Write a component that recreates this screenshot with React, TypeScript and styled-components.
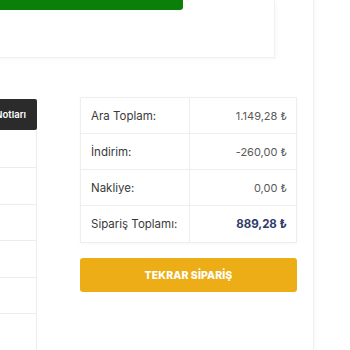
import React from "react";
import styled, { createGlobalStyle } from "styled-components";

const Global = createGlobalStyle`
  html, body { margin: 0; padding: 0; background: #fff; }
  body { font-family: "Inter", "Noto Sans", sans-serif; overflow: hidden; }
`;

const Viewport = styled.div`
  width: 350px;
  height: 350px;
  overflow: hidden;
  display: flex;
  background: #fff;
`;

const Panel = styled.div`
  width: 313px;
  flex: none;
  height: 350px;
  background: #fff;
  border-right: 1px solid #f0f0f0;
  box-shadow: 2px 0 3px rgba(0, 0, 0, 0.025);
  display: flex;
  flex-direction: column;
`;

const TopCard = styled.div`
  margin-left: -60px;
  width: 335px;
  height: 58px;
  box-sizing: border-box;
  border-right: 1px solid #f1f1f1;
  border-bottom: 1px solid #f1f1f1;
  box-shadow: 1px 1px 3px rgba(0, 0, 0, 0.04);
  display: flex;
  align-items: flex-start;
`;

const GreenButton = styled.div`
  width: 243px;
  height: 10px;
  background: #0a7f0a;
  border-radius: 0 0 3px 3px;
`;

const Lower = styled.div`
  margin-top: 39px;
  display: flex;
  align-items: flex-start;
  flex: 1;
`;

const Sidebar = styled.div`
  margin-left: -80px;
  width: 118px;
  flex: none;
  display: flex;
  flex-direction: column;
  align-self: stretch;
`;

const DarkTab = styled.div`
  margin-top: 2px;
  height: 31px;
  width: 117px;
  background: #2b2b2b;
  border-radius: 2px;
  color: #fff;
  font-size: 9.5px;
  font-weight: 600;
  display: flex;
  align-items: center;
  justify-content: flex-end;
  padding-right: 11px;
  box-sizing: border-box;
  white-space: nowrap;
`;

const SideList = styled.div`
  flex: 1;
  border-right: 1px solid #ececec;
  margin-right: 1px;
  display: flex;
  flex-direction: column;
`;

const SideRow = styled.div`
  height: 36.5px;
  flex: none;
  border-bottom: 1px solid #ececec;
  box-sizing: border-box;
  &:first-child { height: 38px; }
`;

const Summary = styled.div`
  margin-left: 42px;
  width: 217px;
  display: flex;
  flex-direction: column;
`;

const Table = styled.div`
  border: 1px solid #eeeeee;
  display: grid;
  grid-template-columns: 108px 108px;
  box-shadow: 0 1px 3px rgba(0, 0, 0, 0.03);
`;

const Cell = styled.div<{ $right?: boolean; $last?: boolean }>`
  height: 36px;
  box-sizing: border-box;
  display: flex;
  align-items: center;
  justify-content: ${(p) => (p.$right ? "flex-end" : "flex-start")};
  padding: ${(p) => (p.$right ? "0 10px 0 0" : "0 0 0 10px")};
  border-left: ${(p) => (p.$right ? "1px solid #eeeeee" : "none")};
  border-bottom: ${(p) => (p.$last ? "none" : "1px solid #eeeeee")};
  font-size: ${(p) => (p.$right ? "11px" : "11.5px")};
  color: ${(p) => (p.$right ? "#5a5a5a" : "#3a3a3a")};
  white-space: nowrap;
`;

const Total = styled.span`
  color: #2d3b6b;
  font-weight: 700;
  font-size: 11.5px;
`;

const ReorderButton = styled.div`
  margin-top: 15px;
  height: 34px;
  background: #ecad16;
  border-radius: 3px;
  color: #fff;
  font-weight: 800;
  font-size: 10.5px;
  display: flex;
  align-items: center;
  justify-content: center;
  letter-spacing: 0.1px;
`;

const rows = [
  { label: "Ara Toplam:", value: "1.149,28 ₺" },
  { label: "İndirim:", value: "-260,00 ₺" },
  { label: "Nakliye:", value: "0,00 ₺" },
];

export default function App() {
  return (
    <>
      <Global />
      <Viewport>
        <Panel>
          <TopCard>
            <GreenButton />
          </TopCard>
          <Lower>
            <Sidebar>
              <DarkTab>Sipariş Notları</DarkTab>
              <SideList>
                <SideRow />
                <SideRow />
                <SideRow />
                <SideRow />
                <SideRow />
              </SideList>
            </Sidebar>
            <Summary>
              <Table>
                {rows.map((r) => (
                  <React.Fragment key={r.label}>
                    <Cell>{r.label}</Cell>
                    <Cell $right>{r.value}</Cell>
                  </React.Fragment>
                ))}
                <Cell $last>Sipariş Toplamı:</Cell>
                <Cell $right $last>
                  <Total>889,28 ₺</Total>
                </Cell>
              </Table>
              <ReorderButton>TEKRAR SİPARİŞ</ReorderButton>
            </Summary>
          </Lower>
        </Panel>
      </Viewport>
    </>
  );
}
